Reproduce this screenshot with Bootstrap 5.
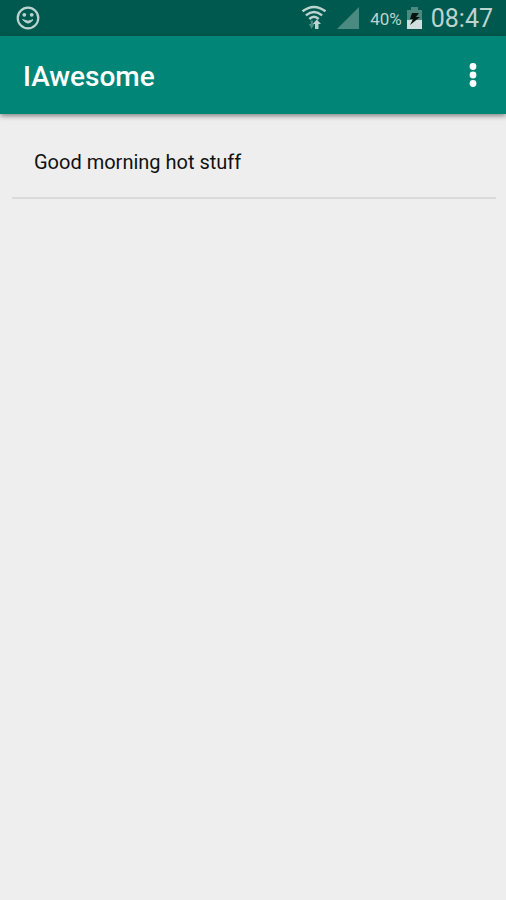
<!DOCTYPE html>
<html lang="en">
<head>
<meta charset="utf-8">
<meta name="viewport" content="width=device-width, initial-scale=1">
<title>IAwesome</title>
<link href="https://cdn.jsdelivr.net/npm/bootstrap@5.3.0/dist/css/bootstrap.min.css" rel="stylesheet">
<style>
body { background: #eee; color: #111; font-family: Roboto, "Liberation Sans", sans-serif; }
.status-bar { background: #00594e; color: #bdd3d0; height: 36px; padding: 0 13px 0 16px; }
.signal { margin-left: 7px; }
.battery-text { font-size: 17px; line-height: 20px; margin: 2px 4px 0 10px; }
.clock { font-size: 25px; line-height: 32px; margin: 2px 0 0 8px; }
.app-bar { background: #008577; min-height: 78px; padding: 0 20px 0 23px; box-shadow: 0 2px 5px rgba(0, 0, 0, .45); }
.app-title { font-size: 28px; line-height: 32px; font-weight: 500; color: #fff; margin-top: 3px; }
.message-list { padding: 24px 10px 0 12px; }
.message { font-size: 20px; line-height: 24px; padding: 12px 22px 23px; border-bottom: 2px solid #dadada; }
</style>
</head>
<body>
<div class="status-bar d-flex align-items-center">
  <svg class="me-auto" width="24" height="24" viewBox="0 0 24 24" fill="none" stroke="#bdd3d0" stroke-width="2.200" stroke-linecap="round" aria-hidden="true">
    <circle cx="12" cy="12" r="10.300"/>
    <path d="M7 13.800Q12 20.500 17 13.800Q12 16.600 7 13.800z" fill="#bdd3d0" stroke-width="1" stroke-linejoin="round"/>
    <circle cx="8.300" cy="8.800" r="1.900" fill="#bdd3d0" stroke="none"/>
    <circle cx="15.700" cy="8.800" r="1.900" fill="#bdd3d0" stroke="none"/>
  </svg>
  <svg width="26" height="26" viewBox="0 0 26 26" fill="none" stroke="#bdd3d0" stroke-width="2.400" aria-hidden="true">
    <path d="M1.500 6.300Q13-2.500 24.500 6.300M4.900 10.300Q13 3.500 21.100 10.300M8.300 14Q13 9.700 17.700 14"/>
    <path d="M10.800 15.500v5.500" stroke="#4f8d85" stroke-width="2"/>
    <path d="M7.800 19h5.600l-2.800 5z" fill="#4f8d85" stroke="none"/>
    <path d="M15.800 14.500l4.200 4.500h-2.500v5h-3.500v-5h-2.300z" fill="#bdd3d0" stroke="none"/>
  </svg>
  <svg class="signal" width="26" height="24" viewBox="0 0 26 24" aria-hidden="true">
    <path d="M3 23L25 1v22z" fill="#4b8a81"/>
  </svg>
  <span class="battery-text">40%</span>
  <svg width="17" height="24" viewBox="0 0 17 24" aria-hidden="true">
    <path d="M5 1h7v3h4v19H1V4h4z" fill="#4b8a81"/>
    <path d="M1 14h15v9H1z" fill="#cfdfdd"/>
    <path d="M6 7h7l-3 4h4L4 19l3-6H4z" fill="#07130f"/>
  </svg>
  <span class="clock">08:47</span>
</div>
<header class="app-bar d-flex align-items-center justify-content-between">
  <h1 class="app-title mb-0">IAwesome</h1>
  <button type="button" class="btn border-0 p-0 d-flex" aria-label="More options">
    <svg width="26" height="26" viewBox="0 0 26 26" fill="#fff" aria-hidden="true">
      <circle cx="13" cy="4.500" r="3.400"/><circle cx="13" cy="13" r="3.400"/><circle cx="13" cy="21.500" r="3.400"/>
    </svg>
  </button>
</header>
<main>
  <ul class="message-list list-unstyled mb-0">
    <li class="message">Good morning hot stuff</li>
  </ul>
</main>
<script src="https://cdn.jsdelivr.net/npm/bootstrap@5.3.0/dist/js/bootstrap.bundle.min.js"></script>
</body>
</html>
